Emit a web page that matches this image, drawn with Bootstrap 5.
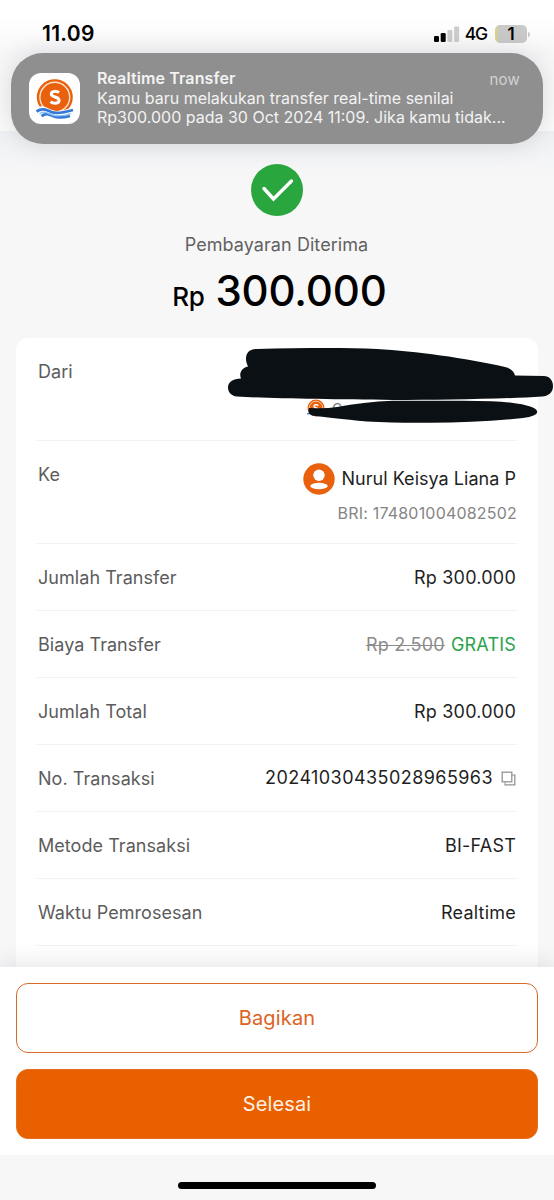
<!DOCTYPE html>
<html lang="id">
<head>
<meta charset="utf-8">
<meta name="viewport" content="width=device-width, initial-scale=1">
<title>Pembayaran Diterima</title>
<link href="https://cdn.jsdelivr.net/npm/bootstrap@5.3.0/dist/css/bootstrap.min.css" rel="stylesheet">
<style>
  body { font-family: Inter, "Liberation Sans", sans-serif; background: #f7f7f8; color: #1f1f1f; }
  svg { display: block; flex: none; }
  .screen { width: 554px; height: 1200px; }
  .top-area { height: 131px; background: linear-gradient(#fff 0, #fff 18px, #f7f7f8 54px, #fbfbfb 131px); }
  .status { height: 54px; padding: 14px 24px 0 42px; color: #000; }
  .status-icons { height: 40px; }
  .clock { font-size: 21px; font-weight: 600; letter-spacing: .3px; line-height: 40px; }
  .network { font-size: 17.5px; font-weight: 500; letter-spacing: -1.2px; line-height: 40px; margin: 0 8px 0 5px; }
  .battery { width: 32px; height: 18px; border-radius: 5px; background: linear-gradient(90deg, #ddd28c 0, #ddd28c 2px, #c9c9c9 3px); font-size: 17px; font-weight: 600; line-height: 18px; }
  .battery-tip { width: 2px; height: 5px; border-radius: 0 2px 2px 0; background: #c9c9c9; margin-left: 1px; }
  .banner { margin: -1px 11px 0; height: 91px; border-radius: 32px; background: #8f8f8f; padding: 20px 23px 0 18px; color: #f3f3f3; font-size: 16px; line-height: 19px; box-shadow: 0 0 24px rgba(60, 60, 75, .17); position: relative; z-index: 2; }
  .app-icon { width: 51px; height: 51px; border-radius: 12px; background: #fff; }
  .banner-text { margin: -4px 0 0 17px; }
  .banner-title { font-weight: 600; letter-spacing: .12px; }
  .banner-time { font-size: 15px; letter-spacing: .2px; color: #d2d2d2; padding-top: 1px; }
  .hero { height: 207px; padding-top: 33px; background: linear-gradient(#eff1f3, #f7f7f8 45px); }
  .hero-label { font-size: 18px; line-height: 24px; margin-top: 17px; color: #626262; letter-spacing: .07px; padding-right: 1px; }
  .amount { line-height: 50px; margin-top: 9px; color: #000; font-weight: 500; gap: 11px; padding-left: 5px; }
  .amount-cur { font-size: 26px; letter-spacing: -.4px; }
  .amount-num { font-size: 42px; letter-spacing: -.15px; }
  .receipt { margin: 0 16px; padding: 0 21px; height: 629px; border-radius: 12px 12px 0 0; background: #fff; font-size: 18px; }
  .line { height: 67px; border-bottom: 1px solid #f1f1f1; line-height: 68px; letter-spacing: .22px; padding: 0 1px; }
  .line-tall { height: 103px; }
  .line-name { color: #5c5c5c; letter-spacing: .05px; }
  .recipient { line-height: 32px; gap: 6px; padding-top: 22px; letter-spacing: .03px; }
  .account { font-size: 16px; line-height: 20px; color: #858585; letter-spacing: .2px; margin-top: 8px; margin-right: -1px; }
  .trx-number { letter-spacing: .43px; }
  .source { position: relative; width: 190px; }
  .source-account { height: 20px; gap: 7px; margin: 61px 0 0 -19px; line-height: 20px; font-size: 14px; color: #777; }
  .scribble { position: absolute; left: -100px; top: 7px; z-index: 1; }
  .old-price { color: #8c8c8c; text-decoration-thickness: 1px; }
  .free { color: #2ba34a; letter-spacing: .2px; margin-left: 6px; }
  .actions { height: 188px; padding: 16px; gap: 16px; background: #fff; box-shadow: 0 -2px 22px rgba(50, 50, 65, .14); position: relative; }
  .actions .btn { height: 70px; border-radius: 12px; font-size: 20px; letter-spacing: .15px; }
  .btn-share { border: 1.5px solid #d66a28; color: #db6422; background: #fff; }
  .btn-done { background: #e96000; border: 1px solid #e4701f; color: #fff0e3; }
  .home-zone { height: 45px; background: #f7f7f7; padding-top: 27px; position: relative; }
  .home-bar { width: 198px; height: 7px; border-radius: 4px; background: #000; }
</style>
</head>
<body>
<main class="screen overflow-hidden">
  <header class="top-area">
    <div class="status d-flex justify-content-between">
      <span class="clock">11.09</span>
      <div class="status-icons d-flex align-items-center">
        <svg width="26" height="18" viewBox="0 0 26 18"><rect x="0" y="11" width="5" height="6" rx="1.3"/><rect x="6.7" y="8" width="5" height="9" rx="1.3"/><rect x="13.4" y="5" width="5" height="12" rx="1.3" fill="#ccc"/><rect x="20.1" y="1.5" width="5" height="15.5" rx="1.3" fill="#ccc"/></svg>
        <span class="network">4G</span>
        <span class="battery text-center">1</span><span class="battery-tip"></span>
      </div>
    </div>
    <section class="banner d-flex align-items-start">
      <div class="app-icon flex-shrink-0">
        <svg width="51" height="51" viewBox="0 0 51 51">
          <circle cx="25.8" cy="24.2" r="18" fill="#e9600d"/>
          <circle cx="25.8" cy="24.2" r="14.9" fill="none" stroke="#fde5cf" stroke-width="1.4"/>
          <path d="M30 19.700C27.500 17.700 22.300 17.800 22.300 21c0 3.800 7.800 2.200 7.800 6.300 0 3.800-6 3.700-8.600 1.300" fill="none" stroke="#fff" stroke-width="3"/>
          <path d="M5 36c8-6 13-1 18.500 1s11 .5 21.500-3v12H5z" fill="#fff"/>
          <path d="M7.500 38.500c6-4 10-1.500 15 .5s11 1 21.500-2M12.500 43c5-3.500 8-1.500 12 .3s9 1.600 16.500-.3" fill="none" stroke="#3978d8" stroke-width="2.800"/>
          <path d="M10.500 40.600c5-2.500 8-.8 12.500 1.200s11 1 19-1.200" fill="none" stroke="#8bc5f4" stroke-width="1.500"/>
        </svg>
      </div>
      <div class="banner-text flex-grow-1 text-nowrap">
        <div class="d-flex justify-content-between"><span class="banner-title">Realtime Transfer</span><span class="banner-time">now</span></div>
        <div>Kamu baru melakukan transfer real-time senilai</div>
        <div>Rp300.000 pada 30 Oct 2024 11:09. Jika kamu tidak...</div>
      </div>
    </section>
  </header>

  <section class="hero d-flex flex-column align-items-center">
    <svg width="52" height="52" viewBox="0 0 52 52"><circle cx="26" cy="26" r="26" fill="#2aa63f"/><path d="M13 24.500 22.500 35 40.500 17" fill="none" stroke="#fff" stroke-width="3.400" stroke-linecap="round"/></svg>
    <div class="hero-label">Pembayaran Diterima</div>
    <div class="amount d-flex align-items-baseline"><span class="amount-cur">Rp</span><span class="amount-num">300.000</span></div>
  </section>

  <section class="receipt">
    <div class="line line-tall d-flex justify-content-between">
      <span class="line-name">Dari</span>
      <div class="source">
        <div class="source-account d-flex">
          <svg width="18" height="20" viewBox="0 0 18 20"><circle cx="9" cy="9" r="8.500" fill="#e9600d"/><circle cx="9" cy="9" r="6.800" fill="none" stroke="#fde5cf" stroke-width=".8"/><path d="M11.300 6.500C10 5.300 6.800 5.400 7 7.300c.2 1.800 4 1.200 4 3.300 0 1.700-3 1.700-4.300.6" fill="none" stroke="#fff" stroke-width="1.500"/><path d="M0 15c3-2 6 1 9 1s6 0 9-1" fill="none" stroke="#3978d8" stroke-width="1.500"/></svg>
          <span>C</span>
        </div>
        <svg class="scribble" width="328" height="80" viewBox="226 345 328 80" fill="#0b1014">
          <path d="M246 359C246 353 249 349 257 349C300 348 345 347.500 377 349C415 351 466 358 505 367C510 368 514 371 515 375.500L544 376C549 376 553 380 553 386C553 393 548 396 542 396.500C505 399 440 400 393 400C330 399.500 270 398.500 237 396.500C231 396 228 392 228 387.500C228 382 233 378.500 241 378.500C239 374 241 368 248 366.500C247 364 246 362 246 359Z"/>
          <path d="M309 408Q325 409 337 407Q363 402 393 400.800H463Q495 401 510 402.600Q537 406 537.300 412Q537 416 523 418Q480 422.500 430 422.700Q395 423 367 421.500Q330 418 312 415.500Q307 413 309 408Z"/>
        </svg>
      </div>
    </div>
    <div class="line line-tall d-flex justify-content-between">
      <span class="line-name">Ke</span>
      <div class="d-flex flex-column align-items-end">
        <div class="recipient d-flex">
          <svg width="32" height="32" viewBox="0 0 32 32"><circle cx="16" cy="16" r="15.700" fill="#e9610d"/><circle cx="16" cy="12.300" r="5.700" fill="#fff"/><ellipse cx="16" cy="23" rx="8.700" ry="3.300" fill="#fff"/></svg>
          <span>Nurul Keisya Liana P</span>
        </div>
        <div class="account">BRI: 174801004082502</div>
      </div>
    </div>
    <div class="line d-flex justify-content-between"><span class="line-name">Jumlah Transfer</span><span>Rp 300.000</span></div>
    <div class="line d-flex justify-content-between"><span class="line-name">Biaya Transfer</span><span><s class="old-price">Rp 2.500</s><span class="free">GRATIS</span></span></div>
    <div class="line d-flex justify-content-between"><span class="line-name">Jumlah Total</span><span>Rp 300.000</span></div>
    <div class="line d-flex justify-content-between">
      <span class="line-name">No. Transaksi</span>
      <span class="d-flex align-items-center"><span class="trx-number">20241030435028965963</span>
        <svg class="ms-2" width="15" height="15" viewBox="0 0 15 15" fill="none" stroke="#949494" stroke-width="1.300"><rect x="1.200" y="1.200" width="9.600" height="9.600"/><path d="M13.800 3.500v10.300H3.500"/><path d="M10.800 4h3M4 10.800v3" stroke-width="1"/></svg></span>
    </div>
    <div class="line d-flex justify-content-between"><span class="line-name">Metode Transaksi</span><span>BI-FAST</span></div>
    <div class="line d-flex justify-content-between"><span class="line-name">Waktu Pemrosesan</span><span>Realtime</span></div>
  </section>

  <footer class="actions d-flex flex-column">
    <button type="button" class="btn btn-share w-100">Bagikan</button>
    <button type="button" class="btn btn-done w-100">Selesai</button>
  </footer>
  <div class="home-zone"><div class="home-bar mx-auto"></div></div>
</main>
<script src="https://cdn.jsdelivr.net/npm/bootstrap@5.3.0/dist/js/bootstrap.bundle.min.js"></script>
</body>
</html>
